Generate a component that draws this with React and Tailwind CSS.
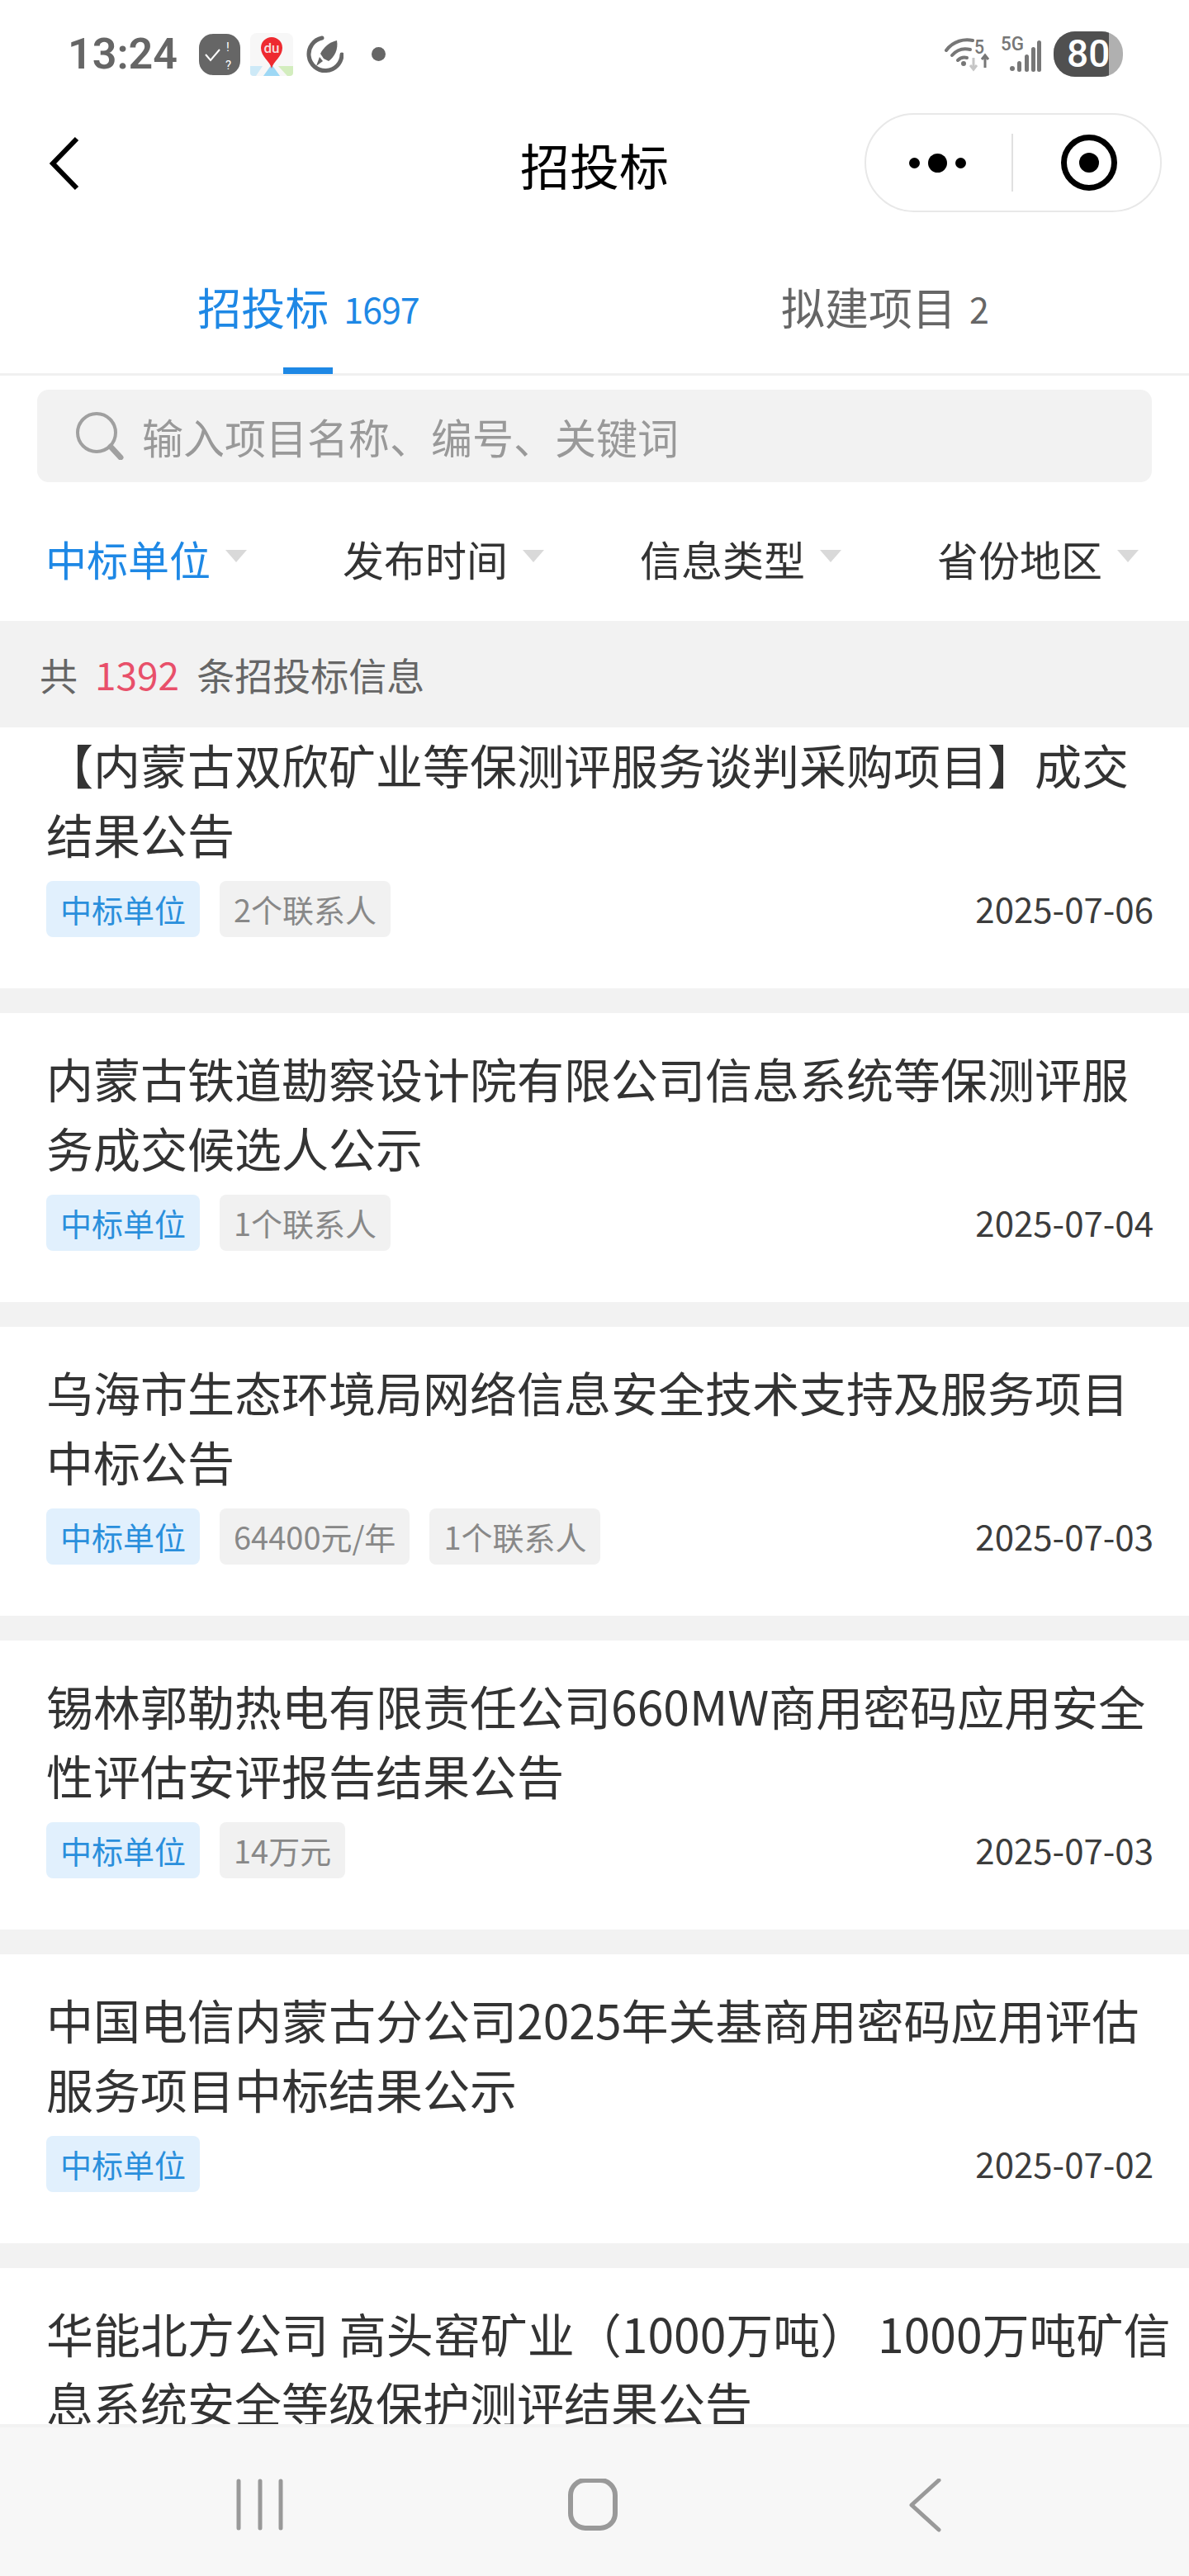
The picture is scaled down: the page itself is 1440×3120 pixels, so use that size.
const cjk = 'font-["Noto_Sans_CJK_SC","Noto_Sans",sans-serif]'

const filters = ['中标单位', '发布时间', '信息类型', '省份地区']

const projects = [
  {
    lines: ['【内蒙古双欣矿业等保测评服务谈判采购项目】成交', '结果公告'],
    tags: ['2个联系人'],
    date: '2025-07-06'
  },
  {
    lines: ['内蒙古铁道勘察设计院有限公司信息系统等保测评服', '务成交候选人公示'],
    tags: ['1个联系人'],
    date: '2025-07-04'
  },
  {
    lines: ['乌海市生态环境局网络信息安全技术支持及服务项目', '中标公告'],
    tags: ['64400元/年', '1个联系人'],
    date: '2025-07-03'
  },
  {
    lines: ['锡林郭勒热电有限责任公司660MW商用密码应用安全', '性评估安评报告结果公告'],
    tags: ['14万元'],
    date: '2025-07-03'
  },
  {
    lines: ['中国电信内蒙古分公司2025年关基商用密码应用评估', '服务项目中标结果公示'],
    tags: [],
    date: '2025-07-02'
  }
]

const ChecklistIcon = () => (
  <svg width="50" height="50" viewBox="0 0 50 50">
    <rect x="0" y="0" width="50" height="50" rx="17" fill="#666" />
    <path d="M8 25l6 7 11-13" fill="none" stroke="#fff" strokeWidth="2" />
    <text x="33" y="21" fontSize="15" fill="#fff" fontFamily="Roboto">!</text>
    <text x="32" y="43" fontSize="15" fill="#fff" fontFamily="Roboto">?</text>
  </svg>
)

const MapIcon = () => (
  <svg width="52" height="52" viewBox="0 0 52 52">
    <rect x="0" y="0" width="52" height="52" rx="8" fill="#f7f7f7" />
    <path d="M0 40h15L7 52H4q-4 0-4-4z" fill="#cde9f7" />
    <path d="M16 52l10-14 10 14z" fill="#9ed8f5" />
    <path d="M34 40h18v8q0 4-4 4h-3z" fill="#d3edbe" />
    <path d="M26 43c-2-9-13-14-13-25a13 13 0 0 1 26 0c0 11-11 16-13 25z" fill="#ee2a30" />
    <text x="26" y="24" fontSize="17" fill="#f6dede" textAnchor="middle" fontFamily="Roboto" fontWeight="500">du</text>
  </svg>
)

const RocketIcon = () => (
  <svg width="46" height="46" viewBox="0 0 46 46">
    <path d="M20 3a20 20 0 1 0 24 20" fill="none" stroke="#666" strokeWidth="5" strokeLinecap="round" />
    <path d="M38 6c2 11-3 20-10 25l-6-3-4-6C22 14 29 8 38 6z" fill="#666" />
    <path d="M17 26l4 5-8 6z" fill="#666" />
  </svg>
)

const WifiIcon = () => (
  <svg width="56" height="44" viewBox="0 0 56 44">
    <g fill="none" stroke="#777" strokeWidth="4" strokeLinecap="round">
      <path d="M2 17c9-12 22-14 32-12" />
      <path d="M9 23c6-7 14-9 22-7" />
      <path d="M16 29c3-3 7-4 11-3" />
    </g>
    <circle cx="23" cy="33" r="3" fill="#777" />
    <text x="36" y="21" fontSize="24" fill="#777" fontFamily="Roboto" fontWeight="500" textLength="12" lengthAdjust="spacingAndGlyphs">5</text>
    <path d="M35 26v14M31 35l4 5 4-5" fill="none" stroke="#c6c6c6" strokeWidth="3" />
    <path d="M49 38V23M45 28l4-5 4 5" fill="none" stroke="#777" strokeWidth="3" />
  </svg>
)

const SignalIcon = () => (
  <svg width="52" height="56" viewBox="0 -6 52 56">
    <text x="0" y="17" fontSize="24" fill="#777" fontFamily="Roboto" fontWeight="500" textLength="28" lengthAdjust="spacingAndGlyphs">5G</text>
    <g fill="#777">
      <circle cx="14" cy="39" r="3" />
      <rect x="20" y="30" width="5" height="13" rx="2.5" />
      <rect x="29" y="22" width="5" height="21" rx="2.5" />
      <rect x="37" y="13" width="5" height="30" rx="2.5" />
      <rect x="44" y="5" width="5" height="38" rx="2.5" />
    </g>
  </svg>
)

// 状态栏电量：深色部分按电量比例填充
const Battery = ({ level }) => (
  <div className="relative w-[84px] h-[55px] rounded-[26px] bg-[#b0b0b0] overflow-hidden">
    <div className="h-full bg-[#505050]" style={{ width: `${level}%` }} />
    <span className='absolute left-[16px] top-0 h-full flex items-center font-["Roboto",sans-serif] font-medium text-[46px] text-white'>
      {level}
    </span>
  </div>
)

const StatusBar = () => (
  <div className="h-[134px] pl-[82px] pr-[80px] pt-[38px] flex items-start justify-between">
    <div className="flex items-center h-[55px]">
      <span className='font-["Roboto",sans-serif] font-semibold text-[52px] text-[#666] mr-[26px]'>13:24</span>
      <ChecklistIcon />
      <span className="w-[12px]" />
      <MapIcon />
      <span className="w-[15px]" />
      <RocketIcon />
      <span className="w-[34px]" />
      <span className="w-[17px] h-[17px] rounded-full bg-[#666]" />
    </div>
    <div className="flex items-center gap-[12px] h-[55px]">
      <WifiIcon />
      <SignalIcon />
      <Battery level={80} />
    </div>
  </div>
)

const NavBar = () => (
  <div className="relative h-[130px] flex items-center justify-between pl-[60px] pr-[33px]">
    <svg width="36" height="66" viewBox="0 0 36 66" fill="none" stroke="#000" strokeWidth="6" className="-mt-[2px]">
      <path d="M33 3L4 33l29 30" />
    </svg>
    <span className="absolute left-0 right-0 text-center text-[60px] leading-none text-black">招投标</span>
    <div className="flex items-center w-[360px] h-[120px] -mt-[4px] rounded-[60px] border-[2px] border-[#e8e8e8]">
      <div className="w-[178px] h-[70px] pr-[4px] flex items-center justify-center gap-[10px] border-r-[2px] border-[#e0e0e0]">
        <span className="w-[13px] h-[13px] rounded-full bg-black" />
        <span className="w-[23px] h-[23px] rounded-full bg-black" />
        <span className="w-[13px] h-[13px] rounded-full bg-black" />
      </div>
      <div className="flex-1 pl-[6px] flex items-center justify-center">
        <div className="w-[68px] h-[68px] rounded-full border-[7px] border-black flex items-center justify-center">
          <span className="w-[24px] h-[24px] rounded-full bg-black" />
        </div>
      </div>
    </div>
  </div>
)

const Tabs = () => (
  <div className="flex h-[191px] border-b-[3px] border-[#f0f0f0]">
    <div className="relative w-1/2 h-full flex items-start justify-center pt-[77px] pl-[27px] text-[#1e88e5]">
      <span className="text-[53px] leading-[60px]">招投标</span>
      <span className="ml-[18px] text-[43px] leading-[64px] tracking-[-1px]">1697</span>
      <span className="absolute left-[343px] bottom-[-1px] w-[60px] h-[8px] bg-[#1e88e5]" />
    </div>
    <div className="w-1/2 h-full flex items-start justify-center pt-[77px] pr-[16px] text-[#666]">
      <span className="text-[53px] leading-[60px]">拟建项目</span>
      <span className="ml-[16px] text-[43px] leading-[64px]">2</span>
    </div>
  </div>
)

const SearchBox = () => (
  <div className="px-[45px] pt-[17px]">
    <div className="h-[112px] rounded-[14px] bg-[#f2f2f2] flex items-center pl-[47px]">
      <svg width="58" height="58" viewBox="0 0 58 58" fill="none" stroke="#a0a0a0">
        <circle cx="25" cy="25" r="23" strokeWidth="4" />
        <path d="M42 42l12 13" strokeWidth="7" strokeLinecap="round" />
      </svg>
      <span className="ml-[22px] text-[50px] leading-none text-[#999]">输入项目名称、编号、关键词</span>
    </div>
  </div>
)

const FilterRow = () => (
  <div className="flex h-[168px] pt-[16px]">
    {filters.map((name, i) => (
      <div key={name} className="flex-1 pr-[6px] flex items-center justify-center">
        <span className={`text-[50px] leading-none ${i === 0 ? 'text-[#1e88e5]' : 'text-[#333]'}`}>{name}</span>
        <span className="ml-[18px] -mt-[6px] w-0 h-0 border-x-[13px] border-x-transparent border-t-[15px] border-t-[#d9d9d9]" />
      </div>
    ))}
  </div>
)

const Tag = ({ active, children }) => (
  <span
    className={`h-[68px] px-[17px] rounded-[8px] flex items-center text-[38px] leading-none ${
      active ? 'bg-[#e1f0fd] text-[#2a8fdc]' : 'bg-[#f1f1f1] text-[#888]'
    }`}
  >
    {children}
  </span>
)

const ProjectCard = ({ project, first }) => (
  <div className={`bg-white pl-[56px] pr-[43px] pb-[62px] border-b-[30px] border-[#f2f2f2] ${first ? 'pt-[2px]' : 'pt-[36px]'}`}>
    <div className="text-[57px] leading-[84px] text-[#333] whitespace-nowrap">
      {project.lines.map((line) => (
        <div key={line}>{line}</div>
      ))}
    </div>
    <div className="mt-[16px] flex items-center gap-[24px]">
      <Tag active>中标单位</Tag>
      {project.tags.map((tag) => (
        <Tag key={tag}>{tag}</Tag>
      ))}
      <span className="ml-auto -mt-[2px] text-[42px] leading-none text-[#3c3c3c]">{project.date}</span>
    </div>
  </div>
)

const SystemNav = () => (
  <div className="h-[184px] shrink-0 bg-[#f7f7f7] border-t-[4px] border-[#f2f2f2] flex items-start">
    <div className="w-full pt-[62px] flex items-center">
      <svg width="1440" height="66" viewBox="0 0 1440 66" fill="none" stroke="#999">
        <path d="M289 3v57M315 3v57M340 3v57" strokeWidth="5" strokeLinecap="round" />
        <rect x="691" y="2" width="54" height="58" rx="18" strokeWidth="6" />
        <path d="M1137 2l-33 30 33 30" strokeWidth="5" strokeLinecap="round" strokeLinejoin="round" />
      </svg>
    </div>
  </div>
)

const App = () => (
  <div className={`w-[1440px] h-[3120px] bg-white flex flex-col overflow-hidden ${cjk}`}>
    <StatusBar />
    <NavBar />
    <Tabs />
    <SearchBox />
    <FilterRow />
    <div className="h-[129px] shrink-0 bg-[#f2f2f2] pl-[48px] flex items-center text-[46px] text-[#666]">
      <span>共</span>
      <span className="mx-[21px] text-[#e8506a]">1392</span>
      <span>条招投标信息</span>
    </div>
    <div className="flex-1 min-h-0 overflow-hidden">
      {projects.map((project, i) => (
        <ProjectCard key={project.date + i} project={project} first={i === 0} />
      ))}
      <div className="pl-[56px] pt-[36px] text-[57px] leading-[84px] text-[#333] whitespace-nowrap">
        <div>华能北方公司 高头窑矿业（1000万吨） 1000万吨矿信</div>
        <div>息系统安全等级保护测评结果公告</div>
      </div>
    </div>
    <SystemNav />
  </div>
)

export default App
